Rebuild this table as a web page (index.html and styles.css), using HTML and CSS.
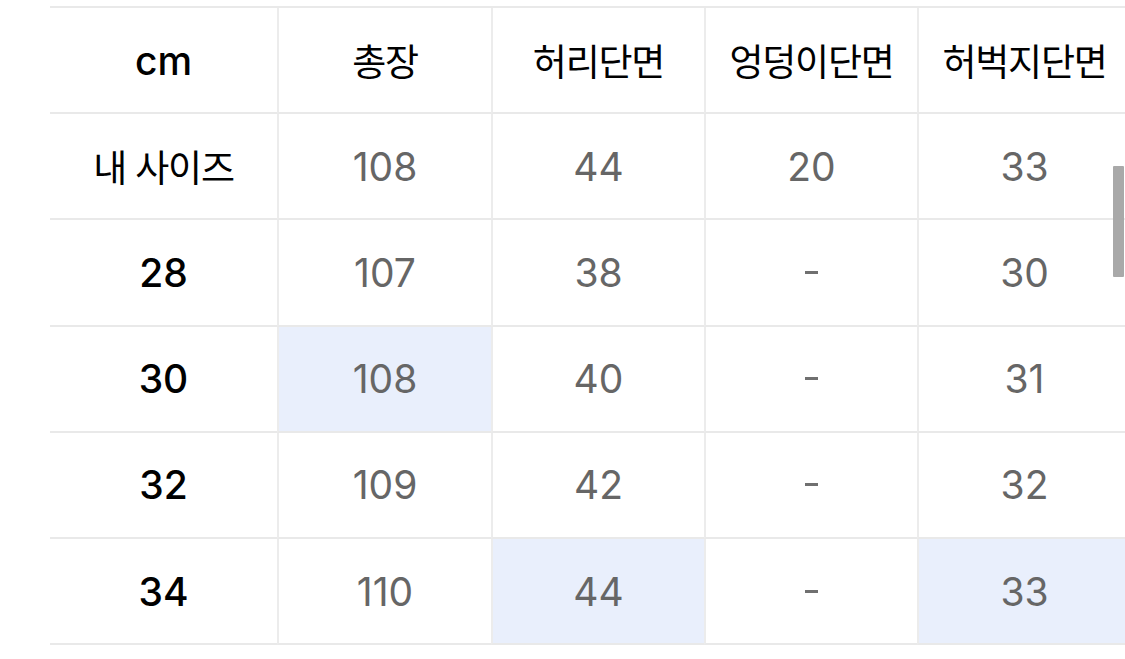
FILE: index.html
```html
<!DOCTYPE html>
<html lang="ko">
<head>
<meta charset="utf-8">
<title>사이즈 표</title>
<link rel="stylesheet" href="styles.css">
</head>
<body>
<div class="wrap">
  <div class="size-table">
    <div class="cell head first">cm</div>
    <div class="cell head ko">총장</div>
    <div class="cell head ko">허리단면</div>
    <div class="cell head ko">엉덩이단면</div>
    <div class="cell head ko">허벅지단면</div>

    <div class="cell label ko first">내 사이즈</div>
    <div class="cell val">108</div>
    <div class="cell val">44</div>
    <div class="cell val">20</div>
    <div class="cell val">33</div>

    <div class="cell label first">28</div>
    <div class="cell val">107</div>
    <div class="cell val">38</div>
    <div class="cell val"><span class="dash"></span></div>
    <div class="cell val">30</div>

    <div class="cell label first">30</div>
    <div class="cell val hl">108</div>
    <div class="cell val">40</div>
    <div class="cell val"><span class="dash"></span></div>
    <div class="cell val">31</div>

    <div class="cell label first">32</div>
    <div class="cell val">109</div>
    <div class="cell val">42</div>
    <div class="cell val"><span class="dash"></span></div>
    <div class="cell val">32</div>

    <div class="cell label first">34</div>
    <div class="cell val">110</div>
    <div class="cell val hl">44</div>
    <div class="cell val"><span class="dash"></span></div>
    <div class="cell val hl">33</div>
  </div>
  <div class="scroll-thumb"></div>
</div>
</body>
</html>
```

FILE: styles.css
```css
html, body {
  margin: 0;
  padding: 0;
  background: #ffffff;
  overflow: hidden;
}

.wrap {
  position: relative;
  width: 1125px;
  height: 659px;
  padding: 6px 0 0 50px;
  box-sizing: border-box;
}

.size-table {
  display: grid;
  grid-template-columns: 227px 214px 213px 213px 213px;
  grid-auto-rows: 106.2px;
  width: 1080px;
  border-top: 2px solid #e9e9e9;
  font-family: Inter, "Noto Sans CJK KR", sans-serif;
}

.cell {
  display: flex;
  align-items: center;
  justify-content: center;
  border-bottom: 2px solid #e9e9e9;
  border-left: 2px solid #ececec;
  box-sizing: border-box;
  font-size: 39px;
  color: #666666;
  white-space: nowrap;
}

.cell.first {
  border-left: none;
}

.cell.head {
  color: #000000;
  font-weight: 500;
}

.cell.label {
  color: #000000;
  font-weight: 500;
}

.cell.ko {
  font-family: "Noto Sans CJK KR", sans-serif;
  font-size: 37px;
  font-weight: 400;
  letter-spacing: -1.2px;
}

.cell.val {
  font-weight: 400;
}

.cell.hl {
  background: #e9effc;
}

.dash {
  display: block;
  width: 13px;
  height: 3px;
  background: #707070;
}

.scroll-thumb {
  position: absolute;
  left: 1113px;
  top: 166px;
  width: 11px;
  height: 111px;
  background: #a9a9a9;
  border-radius: 1px;
}
```
